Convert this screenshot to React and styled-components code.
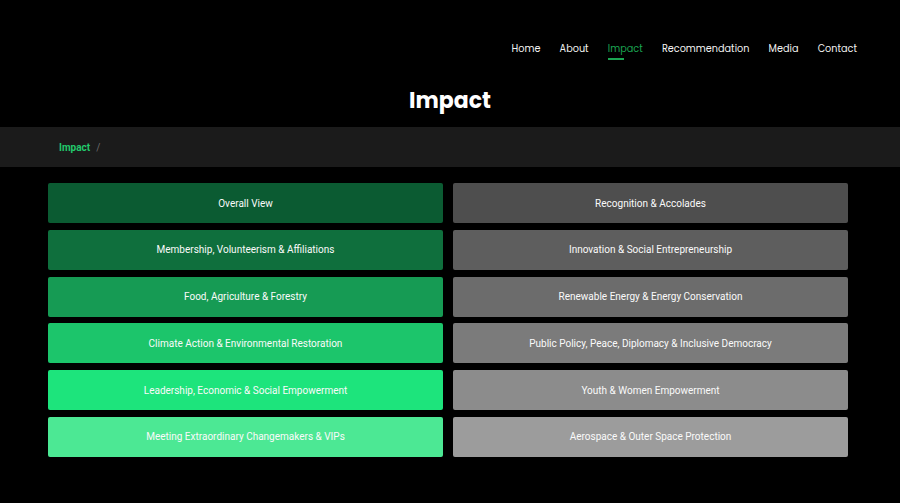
import React from "react";
import styled, { createGlobalStyle } from "styled-components";

const Global = createGlobalStyle`
  html, body { margin: 0; padding: 0; background: #000; }
  body { font-family: Roboto, "Liberation Sans", sans-serif; }
  * { box-sizing: border-box; }
`;

const Page = styled.div`
  width: 900px;
  min-height: 503px;
  background: #000;
  color: #fff;
`;

const Nav = styled.nav`
  display: flex;
  justify-content: flex-end;
  gap: 19.2px;
  padding: 42px 43px 0 0;
  height: 72px;
`;

const NavItem = styled.a`
  position: relative;
  font-family: Poppins, "Open Sans", Inter, sans-serif;
  font-size: 9.7px;
  line-height: 14px;
  color: ${(p) => (p.$active ? "#1ba552" : "#f2f2f2")};
  text-decoration: none;
  &::after {
    content: "";
    display: ${(p) => (p.$active ? "block" : "none")};
    position: absolute;
    left: 0;
    top: 16px;
    width: 16px;
    height: 2px;
    background: #1ba552;
  }
`;

const Title = styled.h1`
  margin: 0;
  text-align: center;
  font-family: Poppins, "Open Sans", Inter, sans-serif;
  font-weight: 700;
  font-size: 22px;
  line-height: 30px;
  height: 55px;
  padding-top: 14px;
  color: #fff;
`;

const Crumbs = styled.div`
  display: flex;
  align-items: center;
  gap: 6px;
  height: 40px;
  background: #1b1b1b;
  padding-left: 59px;
  font-size: 10px;
`;

const CrumbLink = styled.span`
  color: #22c96c;
  font-weight: 700;
`;

const CrumbSep = styled.span`
  color: #6b6b6b;
`;

const Grid = styled.div`
  display: grid;
  grid-template-columns: 395px 395px;
  grid-auto-flow: column;
  grid-template-rows: repeat(6, 40px);
  column-gap: 10px;
  row-gap: 6.8px;
  padding: 16px 0 0 48px;
`;

const Tile = styled.button`
  display: flex;
  align-items: center;
  justify-content: center;
  border: none;
  border-radius: 2px;
  background: ${(p) => p.$bg};
  color: #fafafa;
  font-family: Roboto, "Liberation Sans", sans-serif;
  font-size: 10px;
  cursor: pointer;
  padding: 0;
`;

const left = [
  ["Overall View", "#0b5b32"],
  ["Membership, Volunteerism & Affiliations", "#0f6f3d"],
  ["Food, Agriculture & Forestry", "#169b54"],
  ["Climate Action & Environmental Restoration", "#1cc56b"],
  ["Leadership, Economic & Social Empowerment", "#1de47c"],
  ["Meeting Extraordinary Changemakers & VIPs", "#4ce894"],
];

const right = [
  ["Recognition & Accolades", "#4e4e4e"],
  ["Innovation & Social Entrepreneurship", "#5e5e5e"],
  ["Renewable Energy & Energy Conservation", "#6c6c6c"],
  ["Public Policy, Peace, Diplomacy & Inclusive Democracy", "#7b7b7b"],
  ["Youth & Women Empowerment", "#8c8c8c"],
  ["Aerospace & Outer Space Protection", "#9c9c9c"],
];

export default function App() {
  const navs = ["Home", "About", "Impact", "Recommendation", "Media", "Contact"];
  return (
    <Page>
      <Global />
      <Nav>
        {navs.map((n) => (
          <NavItem key={n} $active={n === "Impact"}>
            {n}
          </NavItem>
        ))}
      </Nav>
      <Title>Impact</Title>
      <Crumbs>
        <CrumbLink>Impact</CrumbLink>
        <CrumbSep>/</CrumbSep>
      </Crumbs>
      <Grid>
        {[...left, ...right].map(([t, c]) => (
          <Tile key={t} $bg={c}>
            {t}
          </Tile>
        ))}
      </Grid>
    </Page>
  );
}
